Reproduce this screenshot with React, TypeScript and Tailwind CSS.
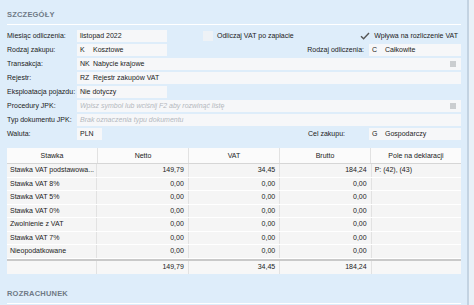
import React from "react";

const font = { fontFamily: '"Liberation Sans", Arial, sans-serif' };

const MenuIcon = () => (
  <svg width="6" height="6" viewBox="0 0 6 6" className="shrink-0">
    <path d="M0 1h6M0 3h6M0 5h6" stroke="#8a8f96" strokeWidth="0.8" />
  </svg>
);

const Field = ({
  code,
  value,
  width,
  placeholder,
  menu,
}: {
  code?: string;
  value?: string;
  width?: string;
  placeholder?: string;
  menu?: boolean;
}) => (
  <div
    className={`h-[12px] bg-[#f6f7f9] flex items-center pl-[3px] pr-[5px] ${width ?? "flex-1"}`}
  >
    {code && <span className="w-[13px] shrink-0">{code}</span>}
    {placeholder ? (
      <span className="italic text-[#b4b8be] flex-1">{placeholder}</span>
    ) : (
      <span className="flex-1">{value}</span>
    )}
    {menu && <MenuIcon />}
  </div>
);

const Row = ({ label, children }: { label: string; children: React.ReactNode }) => (
  <div className="flex items-center h-[14px]">
    <div className="w-[70px] shrink-0">{label}</div>
    {children}
  </div>
);

const rows = [
  ["Stawka VAT podstawowa...", "149,79", "34,45", "184,24", "P: (42), (43)"],
  ["Stawka VAT 8%", "0,00", "0,00", "0,00", ""],
  ["Stawka VAT 5%", "0,00", "0,00", "0,00", ""],
  ["Stawka VAT 0%", "0,00", "0,00", "0,00", ""],
  ["Zwolnienie z VAT", "0,00", "0,00", "0,00", ""],
  ["Stawka VAT 7%", "0,00", "0,00", "0,00", ""],
  ["Nieopodatkowane", "0,00", "0,00", "0,00", ""],
];

const Cells = ({ r, last }: { r: string[]; last?: boolean }) => (
  <>
    <div className="flex-1 pl-[3px] border-r border-[#e2e2e2] flex items-center">{r[0]}</div>
    <div className="flex-1 pr-[4px] border-r border-[#e2e2e2] flex items-center justify-end">{r[1]}</div>
    <div className="flex-1 pr-[4px] border-r border-[#e2e2e2] flex items-center justify-end">{r[2]}</div>
    <div className="flex-1 pr-[4px] border-r border-[#e2e2e2] flex items-center justify-end">{r[3]}</div>
    <div className={`flex-1 pl-[3px] flex items-center ${last ? "" : ""}`}>{r[4]}</div>
  </>
);

export default function App() {
  return (
    <div
      className="w-[474px] h-[305px] bg-[#deedfa] flex overflow-hidden text-[7px] text-[#222]"
      style={font}
    >
      <div className="flex-1 pl-[7px] pr-[6px] flex flex-col">
        {/* szczegóły */}
        <div className="pt-[9px] pb-[4px] border-b border-white text-[#6f7a86] font-bold text-[7.5px] tracking-[0.2px]">
          SZCZEGÓŁY
        </div>
        <div className="pt-[4px] flex flex-col">
          <Row label="Miesiąc odliczenia:">
            <Field value="listopad 2022" width="w-[90px]" />
            <div className="ml-[36px] w-[10px] h-[10px] bg-[#eef2f6]" />
            <span className="ml-[4px]">Odliczaj VAT po zapłacie</span>
            <div className="flex-1" />
            <svg width="10" height="8" viewBox="0 0 10 8" className="mr-[4px]">
              <path d="M1 4.2 3.6 6.8 9 1" fill="none" stroke="#555" strokeWidth="1.4" />
            </svg>
            <span className="mr-[3px]">Wpływa na rozliczenie VAT</span>
          </Row>
          <Row label="Rodzaj zakupu:">
            <Field code="K" value="Kosztowe" width="w-[90px]" />
            <div className="flex-1 text-right pr-[5px]">Rodzaj odliczenia:</div>
            <Field code="C" value="Całkowite" width="w-[92px]" />
          </Row>
          <Row label="Transakcja:">
            <Field code="NK" value="Nabycie krajowe" menu />
          </Row>
          <Row label="Rejestr:">
            <Field code="RZ" value="Rejestr zakupów VAT" />
          </Row>
          <Row label="Eksploatacja pojazdu:">
            <Field value="Nie dotyczy" width="w-[90px]" />
          </Row>
          <Row label="Procedury JPK:">
            <Field placeholder="Wpisz symbol lub wciśnij F2 aby rozwinąć listę" menu />
          </Row>
          <Row label="Typ dokumentu JPK:">
            <Field placeholder="Brak oznaczenia typu dokumentu" />
          </Row>
          <Row label="Waluta:">
            <Field value="PLN" width="w-[25px]" />
            <div className="flex-1 text-right pr-[24px]">Cel zakupu:</div>
            <Field code="G" value="Gospodarczy" width="w-[92px]" />
          </Row>
        </div>

        {/* tabela */}
        <div className="mt-[7px] bg-white flex flex-col">
          <div className="flex h-[16px] border-b border-[#d6d6d6] bg-[#fbfbfb]">
            {["Stawka", "Netto", "VAT", "Brutto", "Pole na deklaracji"].map((h, i) => (
              <div
                key={h}
                className={`flex-1 flex items-center justify-center ${i < 4 ? "border-r border-[#e2e2e2]" : ""}`}
              >
                {h}
              </div>
            ))}
          </div>
          {rows.map((r, i) => (
            <div key={i} className="flex h-[13.5px] bg-[#f5f5f5] border-b border-white">
              <Cells r={r} />
            </div>
          ))}
          <div className="h-[2px] bg-[#c9c9c9]" />
          <div className="flex h-[13px] bg-[#f7f7f7]">
            <Cells r={["", "149,79", "34,45", "184,24", ""]} last />
          </div>
        </div>

        {/* rozrachunek */}
        <div className="mt-[14px] pb-[4px] border-b border-white text-[#6f7a86] font-bold text-[7.5px] tracking-[0.2px]">
          ROZRACHUNEK
        </div>
      </div>
      <div className="w-[2px] bg-[#c3d3e2]" />
      <div className="w-[5px] bg-[#e9f1f8]" />
    </div>
  );
}
